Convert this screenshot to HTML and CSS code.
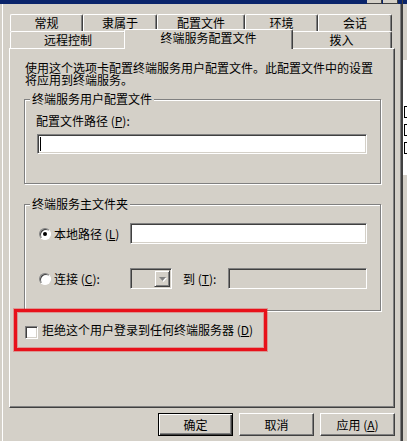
FILE: index.html
```html
<!DOCTYPE html>
<html lang="zh-CN">
<head>
  <meta charset="UTF-8" />
  <title>属性 - 终端服务配置文件</title>
  <link rel="stylesheet" href="styles.css">
</head>
<body>
  <div class="screen">
    <div class="dialog">
      <div class="titlebar">
        <span class="tb-btn"></span>
        <span class="tb-btn"></span>
      </div>

      <div class="tabstrip">
        <div class="tabrow">
          <div class="tab t-general">常规</div>
          <div class="tab t-member">隶属于</div>
          <div class="tab t-profile">配置文件</div>
          <div class="tab t-env">环境</div>
          <div class="tab t-session">会话</div>
        </div>
        <div class="tabrow">
          <div class="tab t-remote">远程控制</div>
          <div class="tab t-ts active">终端服务配置文件</div>
          <div class="tab t-dialin">拨入</div>
        </div>
      </div>

      <div class="panel">
        <p class="intro">使用这个选项卡配置终端服务用户配置文件。此配置文件中的设置<br>将应用到终端服务。</p>

        <fieldset class="group group-profile">
          <legend>终端服务用户配置文件</legend>
          <div class="label">配置文件路径 (<u>P</u>):</div>
          <div class="field path-field"><span class="caret"></span></div>
        </fieldset>

        <fieldset class="group group-home">
          <legend>终端服务主文件夹</legend>
          <div class="opt-row first">
            <span class="radio on"></span>
            <span class="opt-label">本地路径 (<u>L</u>)</span>
            <div class="field local-field"></div>
          </div>
          <div class="opt-row">
            <span class="radio"></span>
            <span class="opt-label">连接 (<u>C</u>):</span>
            <div class="combo">
              <span class="combo-btn">
                <svg width="7" height="4" viewBox="0 0 7 4"><path d="M0 0h7L3.5 4z" fill="#808080"/></svg>
              </span>
            </div>
            <span class="to-label">到 (<u>T</u>):</span>
            <div class="field disabled to-field"></div>
          </div>
        </fieldset>

        <div class="deny">
          <span class="check"></span>
          <span class="deny-text">拒绝这个用户登录到任何终端服务器 (<u>D</u>)</span>
        </div>
      </div>

      <div class="actions">
        <button class="btn default">确定</button>
        <button class="btn">取消</button>
        <button class="btn">应用 (<u>A</u>)</button>
      </div>
    </div>

    <div class="behind">
      <div class="behind-top"></div>
      <div class="behind-list">
        <span class="mark"></span>
        <span class="mark"></span>
        <span class="mark"></span>
      </div>
      <div class="behind-rest"></div>
    </div>
  </div>
</body>
</html>
```

FILE: styles.css
```css
body {
  margin: 0;
  background: #d4d0c8;
  font-family: "Noto Sans CJK SC", "Noto Sans", sans-serif;
  font-size: 12px;
  color: #000;
}

u {
  text-decoration-thickness: 1px;
  text-underline-offset: 1px;
}

.screen {
  display: flex;
  width: 407px;
  height: 441px;
  overflow: hidden;
}

.dialog {
  width: 402px;
  height: 441px;
  flex-shrink: 0;
  background: #d4d0c8;
  box-shadow: inset 2px 0 0 #d4d0c8, inset 3px 0 0 #fff, inset -1px 0 0 #404040, inset -2px 0 0 #808080;
}

/* bottom edge of the caption bar */
.titlebar {
  height: 4px;
  background: #0a246a;
  display: flex;
  justify-content: flex-end;
  gap: 1px;
  padding-right: 4px;
}

.tb-btn {
  width: 14px;
  height: 3px;
  background: #d4d0c8;
  border-right: 1px solid #404040;
  border-bottom: 1px solid #404040;
}

/* tabs */
.tabstrip {
  margin: 10px 0 0 10px;
  width: 382px;
}

.tabrow {
  display: flex;
  height: 17px;
}

.tab {
  box-sizing: border-box;
  height: 17px;
  flex-shrink: 0;
  border: 1px solid #fff;
  border-bottom: 0;
  border-right-color: #404040;
  border-radius: 2px 2px 0 0;
  box-shadow: inset -1px 0 0 #808080;
  background: #d4d0c8;
  display: flex;
  justify-content: center;
  align-items: center;
  line-height: 12px;
}

.t-general { width: 73px; }
.t-member { width: 74px; }
.t-profile { width: 88px; }
.t-env { width: 73px; }
.t-session { width: 74px; }
.t-remote { width: 116px; }
.t-ts { width: 169px; }
.t-dialin { width: 101px; }

.tab.active {
  margin: -2px -2px 0;
  height: 20px;
  align-items: flex-start;
  padding-top: 2px;
  position: relative;
  z-index: 1;
}

/* page */
.panel {
  margin-left: 9px;
  width: 386px;
  height: 360px;
  box-sizing: border-box;
  border: 1px solid;
  border-color: #fff #404040 #404040 #fff;
  box-shadow: inset -1px -1px 0 #808080;
  padding-top: 13px;
}

.intro {
  margin: 0 0 0 15px;
  line-height: 12px;
}

.group {
  margin: 7px 0 0 14px;
  padding: 0;
  width: 357px;
  min-inline-size: 0;
  box-sizing: border-box;
  border: 1px solid #808080;
  box-shadow: inset 1px 1px 0 #fff, 1px 1px 0 #fff;
}

.group legend {
  margin-left: 5px;
  padding: 0 2px;
  line-height: 12px;
  background: #d4d0c8;
}

.group-profile {
  padding-bottom: 29px;
}

.group-home {
  margin-top: 14px;
  padding-bottom: 21px;
}

.label {
  margin: 10px 0 0 11px;
  line-height: 12px;
}

.field {
  box-sizing: border-box;
  height: 21px;
  background: #fff;
  border: 1px solid;
  border-color: #808080 #fff #fff #808080;
  box-shadow: inset 1px 1px 0 #404040, inset -1px -1px 0 #d4d0c8;
}

.field.disabled {
  background: #d4d0c8;
}

.path-field {
  margin: 7px 0 0 12px;
  width: 330px;
  height: 20px;
}

.caret {
  display: block;
  width: 1px;
  height: 14px;
  margin: 2px 0 0 2px;
  background: #000;
}

.opt-row {
  display: flex;
  align-items: center;
  height: 21px;
  margin-top: 24px;
}

.opt-row.first {
  margin-top: 13px;
}

.radio {
  width: 12px;
  height: 12px;
  flex-shrink: 0;
  box-sizing: border-box;
  border-radius: 50%;
  background: #fff;
  border: 1px solid;
  border-color: #808080 #fff #fff #808080;
  box-shadow: inset 1px 1px 0 #404040;
  margin: 0 3px 0 14px;
  display: flex;
  align-items: center;
  justify-content: center;
}

.radio.on::after {
  content: "";
  width: 4px;
  height: 4px;
  border-radius: 50%;
  background: #000;
}

.opt-label {
  width: 76px;
  flex-shrink: 0;
  line-height: 12px;
}

.local-field {
  width: 237px;
}

.combo {
  box-sizing: border-box;
  width: 42px;
  height: 21px;
  flex-shrink: 0;
  border: 1px solid;
  border-color: #808080 #fff #fff #808080;
  box-shadow: inset 1px 1px 0 #404040, inset -1px -1px 0 #d4d0c8;
  padding: 1px 1px 1px 0;
  display: flex;
  justify-content: flex-end;
}

.combo-btn {
  box-sizing: border-box;
  width: 16px;
  height: 17px;
  border: 1px solid;
  border-color: #d4d0c8 #404040 #404040 #d4d0c8;
  box-shadow: inset 1px 1px 0 #fff, inset -1px -1px 0 #808080;
  display: flex;
  align-items: center;
  justify-content: center;
}

.combo-btn svg {
  filter: drop-shadow(1px 1px 0 #fff);
}

.to-label {
  margin-left: 11px;
  width: 45px;
  flex-shrink: 0;
  line-height: 12px;
}

.to-field {
  width: 139px;
}

/* highlighted option */
.deny {
  margin: -2px 0 0 4px;
  width: 253px;
  height: 42px;
  box-sizing: border-box;
  border: 3px solid #e8111a;
  box-shadow: 0 0 0 1px rgba(232, 17, 26, 0.3), inset 0 0 0 1px rgba(232, 17, 26, 0.3);
  display: flex;
  align-items: flex-start;
  padding: 14px 0 0 8px;
  position: relative;
}

.check {
  width: 13px;
  height: 13px;
  flex-shrink: 0;
  box-sizing: border-box;
  background: #fff;
  border: 1px solid;
  border-color: #808080 #fff #fff #808080;
  box-shadow: inset 1px 1px 0 #404040, inset -1px -1px 0 #d4d0c8;
  margin-right: 4px;
}

.deny-text {
  line-height: 12px;
  margin-top: -2px;
  white-space: nowrap;
}

/* dialog buttons */
.actions {
  display: flex;
  justify-content: flex-end;
  gap: 6px;
  margin: 5px 0 0 9px;
  width: 386px;
}

.btn {
  width: 75px;
  height: 23px;
  box-sizing: border-box;
  padding: 0;
  font: inherit;
  line-height: 12px;
  color: #000;
  background: #d4d0c8;
  border: 1px solid;
  border-color: #fff #404040 #404040 #fff;
  box-shadow: inset -1px -1px 0 #808080;
}

.btn.default {
  border-color: #000;
  box-shadow: inset 1px 1px 0 #fff, inset -1px -1px 0 #404040, inset -2px -2px 0 #808080;
}

/* sliver of the window behind */
.behind {
  width: 5px;
  flex-shrink: 0;
  overflow: hidden;
  display: flex;
  flex-direction: column;
  border-left: 1px solid #404040;
}

.behind-top {
  height: 60px;
  background: #d4d0c8;
  border-top: 4px solid #0a246a;
  box-sizing: border-box;
}

.behind-list {
  height: 115px;
  background: #fff;
  padding: 46px 0 0 1px;
  box-sizing: border-box;
  display: flex;
  flex-direction: column;
  gap: 6px;
}

.mark {
  width: 3px;
  height: 10px;
  border-left: 1px solid #000;
  border-top: 1px solid #000;
  border-bottom: 1px solid #000;
}

.behind-rest {
  flex: 1;
  background: #d4d0c8;
}
```
